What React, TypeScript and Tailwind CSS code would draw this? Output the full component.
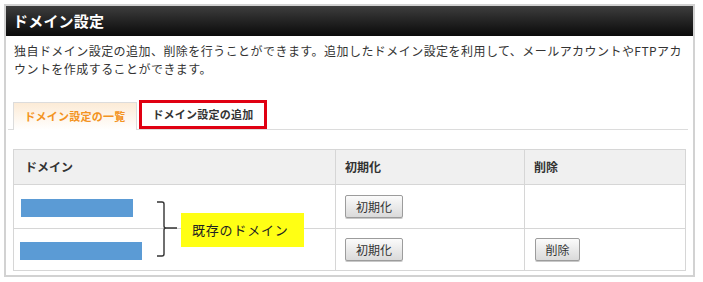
import React from 'react';

const font = { fontFamily: '"Noto Sans CJK JP", "Noto Sans", sans-serif' };

const Btn: React.FC<{ label: string; w: string }> = ({ label, w }) => (
  <button
    className={`${w} h-[23px] border border-[#9c9c9c] rounded-[2px] bg-linear-to-b from-[#fbfbfb] to-[#dadada] text-[12px] text-[#333] leading-none shadow-[0_1px_0_#c8c8c8]`}
  >
    {label}
  </button>
);

const App: React.FC = () => {
  return (
    <div className="w-[703px] h-[282px] bg-white pt-[4px] pl-[4px]" style={font}>
      <div className="w-[691px] h-[273px] border-2 border-[#d2d2d2] flex flex-col">
        {/* Title bar */}
        <div className="h-[30px] bg-linear-to-b from-[#3e3e3e] to-[#0b0b0b] flex items-center pl-[7px]">
          <h1 className="text-white text-[15px] font-bold tracking-[0.2px]">ドメイン設定</h1>
        </div>

        {/* Description */}
        <p className="mt-[6px] pl-[8px] text-[12px] leading-[18px] text-[#333] tracking-[0.45px] whitespace-nowrap">
          独自ドメイン設定の追加、削除を行うことができます。追加したドメイン設定を利用して、メールアカウントやFTPアカ
          <br />
          ウントを作成することができます。
        </p>

        {/* Tabs */}
        <div className="mt-[22px] ml-[2px] mr-[5px] h-[30px] flex items-end pl-[5px] gap-[2px] border-b border-[#dcdcdc]">
          <div className="w-[124px] h-[28px] -mb-px border border-b-0 border-[#dcdcdc] bg-linear-to-b from-[#fcebd6] to-white flex items-center justify-center">
            <span className="text-[11px] font-bold text-[#f39321] tracking-[0.25px]">ドメイン設定の一覧</span>
          </div>
          <div className="w-[128px] h-[29px] border-[3px] border-[#e00012] bg-white flex items-center justify-center">
            <span className="text-[11px] font-bold text-[#333] tracking-[0.25px]">ドメイン設定の追加</span>
          </div>
        </div>

        {/* Table */}
        <div className="relative mt-[19px] ml-[7px] w-[673px] border border-[#d6d6d6] grid grid-cols-[322px_189px_1fr] text-[12px] text-[#333]">
          <div className="h-[35px] bg-[#f0f0f0] border-r border-b border-[#d6d6d6] flex items-center pl-[11px] font-bold">ドメイン</div>
          <div className="h-[35px] bg-[#f0f0f0] border-r border-b border-[#d6d6d6] flex items-center pl-[9px] font-bold">初期化</div>
          <div className="h-[35px] bg-[#f0f0f0] border-b border-[#d6d6d6] flex items-center pl-[9px] font-bold">削除</div>

          <div className="h-[44px] border-r border-b border-[#d6d6d6] flex items-center pl-[7px] pt-[3px]">
            <div className="w-[112px] h-[18px] bg-[#5b9bd5]" />
          </div>
          <div className="h-[44px] border-r border-b border-[#d6d6d6] flex items-center pl-[9px]">
            <Btn label="初期化" w="w-[58px]" />
          </div>
          <div className="h-[44px] border-b border-[#d6d6d6]" />

          <div className="h-[41px] border-r border-[#d6d6d6] flex items-center pl-[6px] pt-[3px]">
            <div className="w-[122px] h-[18px] bg-[#5b9bd5]" />
          </div>
          <div className="h-[41px] border-r border-[#d6d6d6] flex items-center pl-[9px]">
            <Btn label="初期化" w="w-[58px]" />
          </div>
          <div className="h-[41px] flex items-center pl-[10px]">
            <Btn label="削除" w="w-[45px]" />
          </div>

          {/* Annotation */}
          <svg className="absolute left-[142px] top-[50px]" width="24" height="60" viewBox="0 0 24 60" fill="none">
            <path d="M1 2 H6 Q8 2 8 4 V26 Q8 28 10 28 H21 M10 28 Q8 28 8 30 V54 Q8 56 6 56 H1" stroke="#333" strokeWidth="1.4" />
          </svg>
          <div className="absolute left-[167px] top-[63px] w-[123px] h-[34px] bg-[#ffff14] flex items-center pl-[11px]">
            <span className="text-[13px] text-[#222] tracking-[0.8px]">既存のドメイン</span>
          </div>
        </div>
      </div>
    </div>
  );
};

export default App;
